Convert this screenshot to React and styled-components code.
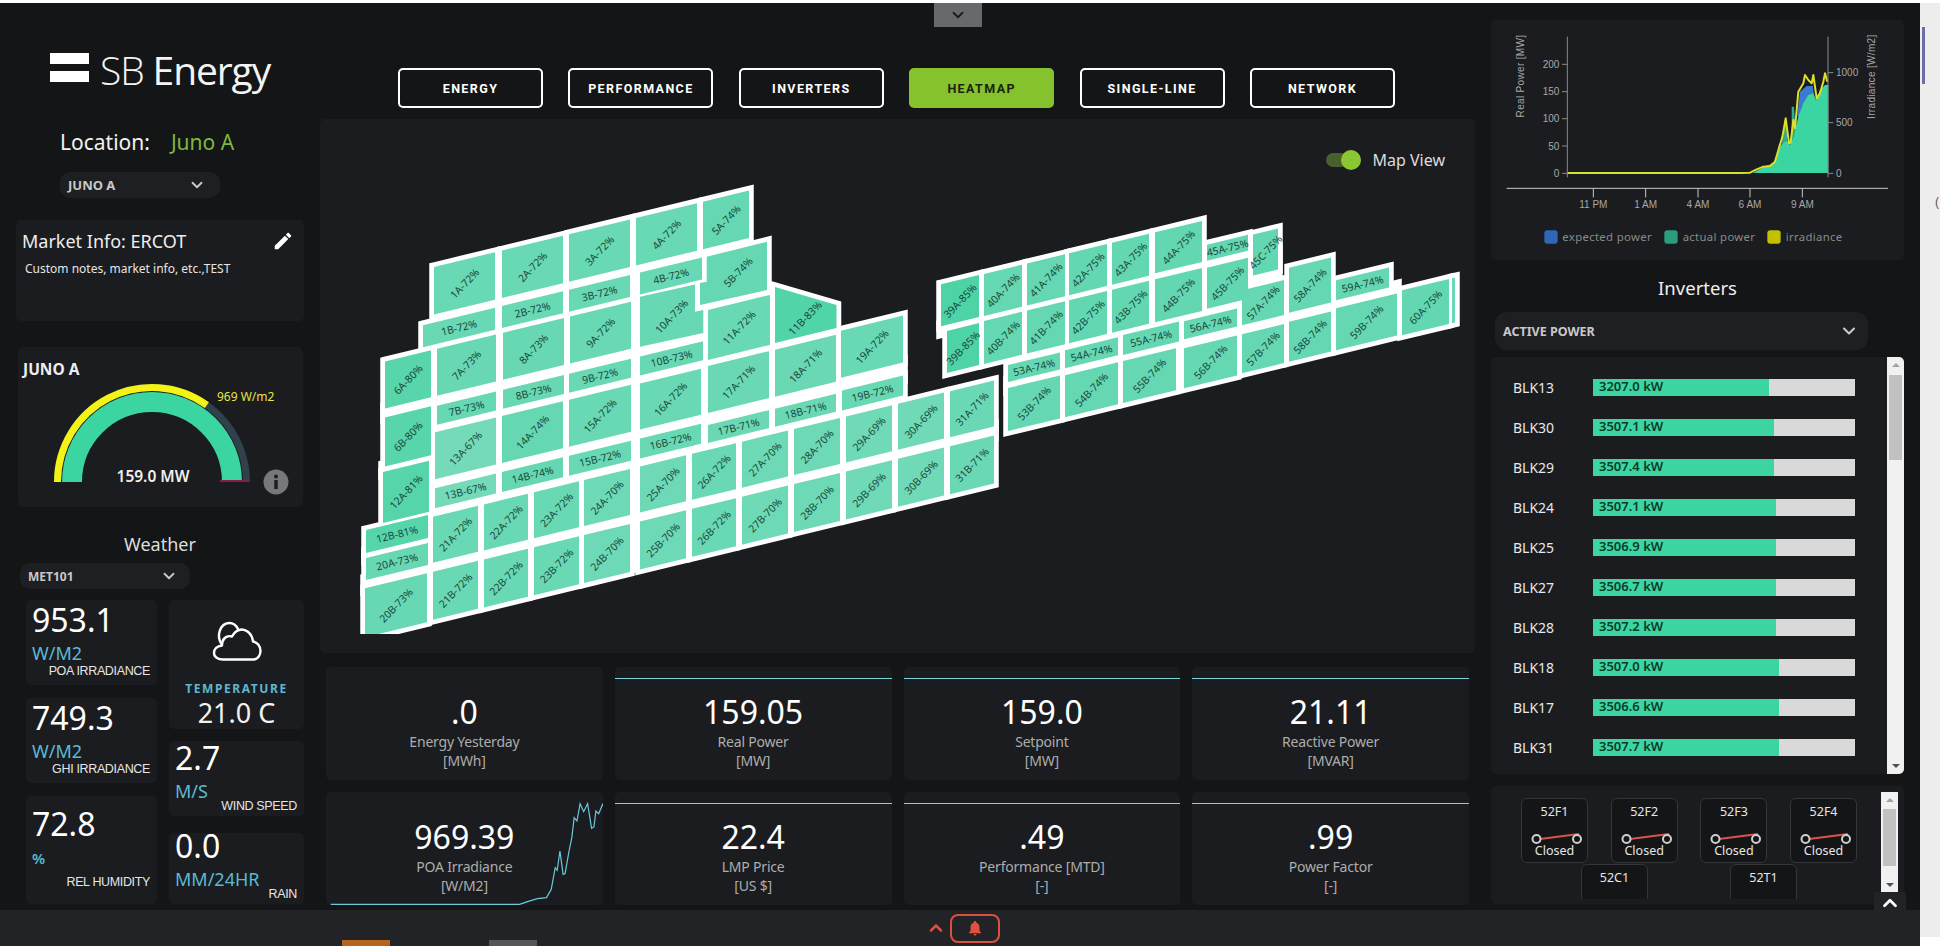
import React from 'react';
import styled, { createGlobalStyle } from 'styled-components';
import { ChevronDown, ChevronUp } from 'lucide-react';

const Global = createGlobalStyle`
  html, body { margin: 0; padding: 0; background: #fff; overflow: hidden; }
  * { box-sizing: border-box; }
`;
const sans = `"Noto Sans", "Open Sans", sans-serif`;
const arial = `"Liberation Sans", Arial, sans-serif`;

const Page = styled.div`
  position: relative; width: 1940px; height: 946px; padding-top: 3px; display: flex; overflow: hidden;
  font-family: ${sans}; color: #fff; background: #fff;
`;
const Shell = styled.div`width: 1920px; height: 943px; display: flex; flex-direction: column; background: #141517;`;
const Main = styled.div`display: flex; height: 907px; overflow: hidden;`;
const SideStrip = styled.div`position: relative; width: 20px; height: 934px; background: #ededed; flex: none;`;
const SideThumb = styled.div`position: absolute; left: 2px; top: 24px; width: 3px; height: 57px; background: #6b6fa8;`;
const SideGlyph = styled.span`position: absolute; left: 15px; top: 192px; font: 12px ${arial}; color: #555;`;
const TopTab = styled.div`
  position: absolute; left: 934px; top: 3px; width: 48px; height: 24px; background: #68696b;
  display: flex; align-items: center; justify-content: center; color: #1b1c1e;
`;

/* Left column */
const LeftCol = styled.div`width: 320px; flex: none; display: flex; flex-direction: column; align-items: flex-start;`;
const Logo = styled.div`margin: 47px 0 0 50px; height: 35px; display: flex; align-items: center; gap: 11px;`;
const LogoBars = styled.div`width: 39px; display: flex; flex-direction: column; gap: 7px;`;
const LogoBar = styled.div`height: 11px; background: #fff;`;
const LogoText = styled.div`margin-top: 3px; font: 400 39px/35px "Open Sans", ${sans}; letter-spacing: -1.1px; white-space: nowrap; color: #f4f4f4;`;
const LogoThin = styled.span`font-weight: 300;`;
const Location = styled.div`margin: 43px 0 0 60px; display: flex; gap: 21px; font-size: 21px; line-height: 28px; color: #f2f2f2;`;
const LocationValue = styled.span`color: #7fb83a;`;
const Select = styled.div`
  margin: ${p => p.$m}; width: ${p => p.$w}px; height: ${p => p.$h}px; background: #1e1f22; border-radius: ${p => p.$r}px;
  display: flex; align-items: center; justify-content: space-between; padding: 0 ${p => p.$pr}px 0 8px;
  font-weight: 700; font-size: ${p => p.$fs}px; color: #c9c9c9;
`;
const Card = styled.div`background: #1a1c1f; border-radius: 5px;`;
const MarketCard = styled(Card)`margin: 22px 0 0 16px; width: 288px; height: 101px; padding: 8px 10px 0 6px;`;
const MarketHead = styled.div`display: flex; justify-content: space-between; align-items: center; font-size: 18px; line-height: 26px; color: #eee;`;
const MarketNote = styled.div`margin: 7px 0 0 3px; font-size: 12px; line-height: 16px; color: #e5e5e5;`;
const GaugeCard = styled(Card)`margin: 26px 0 0 18px; width: 285px; height: 160px; padding-top: 12px; overflow: hidden;`;
const GaugeTitle = styled.div`margin-left: 5px; height: 20px; font-weight: 700; font-size: 15.5px; line-height: 20px; color: #eee;`;
const GaugeSvg = styled.svg`display: block; width: 285px; height: 128px;`;
const WeatherTitle = styled.div`margin-top: 25px; width: 320px; text-align: center; font-size: 18px; line-height: 24px; color: #ddd;`;
const WeatherGrid = styled.div`margin: 11px 0 0 26px; width: 278px; display: flex; justify-content: space-between;`;
const WeatherColL = styled.div`width: 131px; display: flex; flex-direction: column; gap: 13px;`;
const WeatherColR = styled.div`width: 135px; display: flex; flex-direction: column; gap: 12px;`;
const Metric = styled(Card)`
  height: ${p => p.$h}px; padding: ${p => p.$pad}px 7px 0 6px; margin-top: ${p => p.$mt || 0}px;
`;
const MetricValue = styled.div`font-size: 32px; line-height: 26px; color: #fff;`;
const MetricUnit = styled.div`margin-top: ${p => p.$g}px; font-size: ${p => p.$fs || 18}px; font-weight: ${p => p.$w || 400}; line-height: 26px; color: #5ab9d4;`;
const MetricCaption = styled.div`margin-top: ${p => p.$g}px; text-align: right; font: 12.5px/14px ${arial}; letter-spacing: -.35px; color: #e6e6e6;`;
const TempCard = styled(Card)`height: 129px; display: flex; flex-direction: column; align-items: center; padding-top: 21px;`;
const TempLabel = styled.div`margin-top: 18px; font-weight: 700; font-size: 12px; line-height: 16px; letter-spacing: 1.6px; color: #5fb7d0;`;
const TempValue = styled.div`font-size: 27px; line-height: 32px; color: #f2f2f2;`;

/* Center */
const CenterCol = styled.div`width: 1160px; flex: none;`;
const Nav = styled.div`padding: 65px 0 0 78px; display: flex; gap: 25.4px;`;
const NavButton = styled.div`
  width: 145px; height: 40px; border-radius: 5px; display: flex; align-items: center; justify-content: center;
  font: 700 12.5px Roboto, ${arial}; letter-spacing: 1.4px;
  border: 2px solid ${p => (p.$active ? '#85c22e' : '#fff')};
  background: ${p => (p.$active ? '#85c22e' : 'transparent')};
  color: ${p => (p.$active ? '#17260a' : '#fff')};
`;
const MapPanel = styled(Card)`position: relative; margin-top: 11px; width: 1155px; height: 534px; overflow: hidden;`;
const MapSvg = styled.svg`display: block; width: 1155px; height: 534px;`;
const MapToggle = styled.div`position: absolute; right: 30px; top: 30px; display: flex; align-items: center; gap: 25px; font-size: 16px; line-height: 22px; color: #ddd;`;
const ToggleTrack = styled.div`position: relative; width: 22px; height: 14px; border-radius: 7px; background: #47602d;`;
const ToggleThumb = styled.div`position: absolute; left: 15px; top: -3px; width: 20px; height: 20px; border-radius: 50%; background: #8ac832;`;
const KpiGrid = styled.div`margin: 14px 0 0 6px; width: 1143px; display: grid; grid-template-columns: repeat(4, 1fr); grid-auto-rows: 113px; gap: 12px;`;
const Kpi = styled(Card)`position: relative; padding-top: 25px; text-align: center;`;
const KpiLine = styled.div`position: absolute; left: 0; right: 0; top: 11px; height: 1px; background: #7fd4dc;`;
const KpiSpark = styled.svg`position: absolute; left: 0; bottom: 0; width: 277px; height: 113px;`;
const KpiValue = styled.div`position: relative; font-size: 32px; line-height: 40px; color: #fff;`;
const KpiLabel = styled.div`position: relative; font-size: 14px; line-height: 19px; letter-spacing: -.2px; color: #adadad;`;

/* Right */
const RightCol = styled.div`width: 440px; flex: none; padding-left: 11px;`;
const ChartCard = styled(Card)`margin-top: 17px; width: 413px; height: 240px;`;
const ChartSvg = styled.svg`display: block; width: 413px; height: 240px;`;
const InvTitle = styled.div`margin: 14px 0 0 0; width: 413px; text-align: center; font-size: 18.5px; line-height: 28px; color: #eee;`;
const ListPanel = styled(Card)`margin-top: 7px; width: 413px; height: 417px; display: flex; overflow: hidden;`;
const ListBody = styled.div`flex: 1; padding: 10px 0 0 22px;`;
const InvRow = styled.div`height: 40px; display: flex; align-items: center;`;
const InvName = styled.div`width: 80px; font-size: 14px; color: #e8e8e8;`;
const InvBar = styled.div`position: relative; width: 262px; height: 17px; background: #d9d9d9;`;
const InvFill = styled.div`height: 100%; background: #3bd5a1;`;
const InvValue = styled.span`position: absolute; left: 6px; top: -2px; font-weight: 600; font-size: 13px; line-height: 18px; color: #0c3a2b;`;
const Scrollbar = styled.div`
  width: 17px; flex: none; background: #f1f1f1; height: ${p => p.$h}px; margin: ${p => p.$m}; position: relative;
`;
const ScrollThumb = styled.div`position: absolute; left: 2px; right: 2px; top: ${p => p.$top}px; height: ${p => p.$h}px; background: #c1c1c1;`;
const ArrowUp = styled.div`position: absolute; left: 5px; top: 6px; width: 0; height: 0; border: 4px solid transparent; border-top: 0; border-bottom: 4px solid #a3a3a3;`;
const ArrowDown = styled.div`position: absolute; left: 5px; bottom: 6px; width: 0; height: 0; border: 4px solid transparent; border-bottom: 0; border-top: 4px solid #505050;`;
const BreakerPanel = styled(Card)`margin-top: 12px; width: 413px; height: 118px; display: flex;`;
const BreakerBody = styled.div`flex: 1; height: 113px; overflow: hidden; padding-top: 12px;`;
const BreakerRow = styled.div`display: flex; padding-left: ${p => p.$pl}px; gap: ${p => p.$gap}px; margin-bottom: 1px;`;
const Breaker = styled.div`
  width: 67px; height: 65px; flex: none; border: 1px solid #333538; border-radius: 6px; background: #141517;
  display: flex; flex-direction: column; align-items: center; padding-top: 5px;
`;
const BreakerName = styled.div`font-size: 12.5px; line-height: 16px; color: #e6e6e6;`;
const BreakerSvg = styled.svg`display: block; margin-top: 12px; width: 65px; height: 14px; flex: none;`;
const BreakerState = styled.div`margin-top: -2px; font-size: 12.5px; line-height: 14px; color: #e6e6e6;`;
const UpButton = styled.div`
  position: absolute; left: 1874px; top: 892px; width: 32px; height: 32px; background: #222327; border-radius: 2px;
  display: flex; justify-content: center; color: #fff;
`;

/* Bottom */
const BottomBar = styled.div`position: relative; flex: none; height: 36px; background: #222327; display: flex; align-items: center; padding-left: 926px; gap: 4px; color: #d9503f;`;
const BellBox = styled.div`width: 50px; height: 29px; border: 2px solid #d9503f; border-radius: 8px; display: flex; align-items: center; justify-content: center;`;
const Stub = styled.div`position: absolute; bottom: 0; left: ${p => p.$l}px; width: 48px; height: 6px; background: ${p => p.$c};`;

/* data */
const S = 0.243;
const A = (n, x0, x1, v0, v1, shape) => [n, x0, x1, v0, v1, shape];
const CELLS = [
  A('1A-72%',434,495,372.5,420),A('2A-72%',502,563,372.5,420),A('3A-72%',569,630,372.5,420),A('4A-72%',636,697,372.5,420),A('5A-74%',703,749,372.5,420),
  A('1B-72%',423,495,428,450),A('2B-72%',502,563,428,450),A('3B-72%',569,630,428,450),A('4B-72%',640,702,428,450),
  A('5B-74%',707,769,429,474,'706.7,256.7 767,241.7 767,290 700,305 700,283 706.7,281.7'),
  A('6A-80%',385,431,455,502),A('7A-73%',437,496,455,502),A('8A-73%',503,564,455,502),A('9A-72%',570,631,455,502),
  A('10A-73%',640,703,457,502,'640,296.7 695,284.5 695,311.7 703.3,310 703.3,333 640,346.7'),
  A('6B-80%',385,431,511,560),A('7B-73%',437,496,512,531),A('8B-73%',503,564,512,531),A('9B-72%',569,631,512,531),A('10B-73%',640,703,512,531),
  A('11A-72%',708,770,482,532),A('19A-72%',841,903,535,582),A('18A-71%',775,836,538,585),A('17A-71%',708,769,538,585),A('16A-72%',640,701,539,585),
  A('13A-67%',435,496,538,585),A('14A-74%',502,563,538,585),A('15A-72%',569,631,538,585),
  A('12A-81%',383,429,565,616),A('13B-67%',435,496,594,614),A('14B-74%',502,563,594,614),A('15B-72%',569,631,594,614),A('16B-72%',640,701,594,614),A('17B-71%',708,769,597,615),A('18B-71%',775,836,597,615),A('19B-72%',842,903,595,615),
  A('12B-81%',366,428,619,642),A('20A-73%',366,428,647,669),A('20B-73%',365,427,677,726),
  A('21A-72%',433,478,622,668),A('22A-72%',484,528,622,668),A('23A-72%',534,579,622,668),A('24A-70%',584,630,622,668),A('25A-70%',640,686,622,668),A('26A-72%',692,736,622,668),A('27A-70%',742,788,622,668),A('28A-70%',794,840,622,668),A('29A-69%',846,892,622,668),A('30A-69%',898,944,622,668),A('31A-71%',950,994,622,668),
  A('21B-72%',433,478,677,725),A('22B-72%',484,528,677,725),A('23B-72%',534,579,677,725),A('24B-70%',584,630,677,725),A('25B-70%',640,686,677,725),A('26B-72%',692,736,677,725),A('27B-70%',742,788,677,725),A('28B-70%',794,840,677,725),A('29B-69%',846,892,677,725),A('30B-69%',898,944,677,725),A('31B-71%',950,994,677,725),
  A('39A-85%',941,979,513,555),A('40A-74%',984,1022,513,555),A('41A-74%',1027,1065,513,555),A('42A-75%',1069,1107,513,555),A('43A-75%',1112,1149,513,555),A('44A-75%',1155,1202,513,554),A('45A-75%',1207,1248,538,554),A('45C-75%',1253,1278,539,580),
  A('39B-85%',947,979,561,603),A('40B-74%',984,1022,560,603),A('41B-74%',1027,1065,560,603),A('42B-75%',1069,1107,560,603),A('43B-75%',1112,1149,560,603),A('44B-75%',1155,1202,560,603),A('45B-75%',1207,1248,561,602),
  A('53A-74%',1008,1060,610,627),A('54A-74%',1065,1118,609,627),A('55A-74%',1123,1179,608,628),A('56A-74%',1184,1237,609,627),A('57A-74%',1242,1284,592,627),A('58A-74%',1289,1331,581,626),A('59A-74%',1336,1389,605,625),
  A('53B-74%',1008,1060,633,676),A('54B-74%',1065,1118,634,676),A('55B-74%',1123,1176,634,676),A('56B-74%',1184,1237,636,676),A('57B-74%',1242,1284,636,675),A('58B-74%',1289,1331,635,675),A('59B-74%',1336,1397,633,675),A('60A-75%',1402,1449,631,676),
  A('',1452,1455,631,676),
];
const BACKING = [
  [628,642,425,722],[437,703,500,514],[437,703,529,540],[435,631,583,596],[640,903,580,600],[435,631,612,624],
  [640,994,666,679],[433,631,666,679],[385,431,500,512],[366,428,640,649],[365,428,667,679],[383,429,558,567],[708,770,530,540],
  [941,1202,553,562],[1207,1248,552,563],[1248,1278,560,600],[1008,1237,625,635],[1242,1397,624,637],
];
const ROOF = '775,287 836.5,305 836.5,328 775,343';

const pts = (x0, x1, v0, v1) =>
  `${x0},${v0 - S * x0} ${x1},${v0 - S * x1} ${x1},${v1 - S * x1} ${x0},${v1 - S * x0}`;
const shapeOf = (c) => c[5] || pts(c[1], c[2], c[3], c[4]);
const pctColor = (pct) => {
  const t = Math.max(0, Math.min(1, (pct - 67) / 18));
  const mix = (a, b) => Math.round(a + (b - a) * t);
  return `rgb(${mix(116, 77)},${mix(218, 211)},${mix(185, 166)})`;
};
const cellPct = (n) => parseInt(n.split('-')[1] || '72', 10);

const Heatmap = () => (
  <MapSvg viewBox="320 119 1155 534">
    <defs><clipPath id="mapclip"><rect x="320" y="119" width="1155" height="515" /></clipPath></defs>
    <g clipPath="url(#mapclip)">
      <g fill="#fff" stroke="#fff" strokeWidth="9.5" strokeLinejoin="miter">
        {BACKING.map((b, i) => <polygon key={i} points={pts(...b)} />)}
        {CELLS.map((c, i) => <polygon key={i} points={shapeOf(c)} />)}
        <polygon points={ROOF} />
      </g>
      {CELLS.map((c, i) => <polygon key={i} points={shapeOf(c)} fill={pctColor(cellPct(c[0]))} />)}
      <polygon points={ROOF} fill={pctColor(83)} />
      <g fontFamily="Noto Sans, sans-serif" fontSize="10.4" fill="#17493a" textAnchor="middle" dominantBaseline="central">
        {CELLS.filter(c => c[0]).map((c) => {
          const xc = (c[1] + c[2]) / 2;
          const yc = (c[3] + c[4]) / 2 - S * xc;
          const rot = c[4] - c[3] > 30 ? -46 : -13.7;
          return <text key={c[0]} x={xc} y={yc} transform={`rotate(${rot} ${xc} ${yc})`}>{c[0]}</text>;
        })}
        <text x="805" y="318" transform="rotate(-46 805 318)">11B-83%</text>
      </g>
    </g>
  </MapSvg>
);

const arc = (cx, cy, r, a0, a1) => {
  const p = (a) => [cx + r * Math.cos(a), cy - r * Math.sin(a)];
  const [x0, y0] = p(a0); const [x1, y1] = p(a1);
  return `M${x0} ${y0} A${r} ${r} 0 0 1 ${x1} ${y1}`;
};
const YEL_END = Math.atan2(0.814, 0.581);

const Gauge = () => (
  <GaugeSvg viewBox="18 378 285 128">
    <path d={arc(152, 481, 94.5, Math.PI, 0)} fill="none" stroke="#2f414b" strokeWidth="7" />
    <path d={arc(152, 481, 94.5, Math.PI, YEL_END)} fill="none" stroke="#f3f316" strokeWidth="7" />
    <path d={arc(152, 481, 80, Math.PI, 0)} fill="none" stroke="#3bd5a1" strokeWidth="20" />
    <line x1="220" x2="247" y1="480" y2="480" stroke="#8b1a4c" strokeWidth="2" />
    <text x="153" y="481" textAnchor="middle" fontFamily="Noto Sans, sans-serif" fontWeight="600" fontSize="15.5" fill="#f0f0f0">159.0 MW</text>
    <text x="217" y="400" fontFamily="Noto Sans, sans-serif" fontSize="12" fill="#e3e34a">969 W/m2</text>
    <circle cx="276" cy="481" r="12.5" fill="#77787a" />
    <circle cx="276" cy="475.5" r="1.9" fill="#1a1c1f" />
    <rect x="274.3" y="479" width="3.4" height="9" fill="#1a1c1f" />
  </GaugeSvg>
);

const CloudIcon = () => (
  <svg width="50" height="42" viewBox="0 0 50 42" fill="none" stroke="#fff" strokeWidth="2.4" strokeLinejoin="round" strokeLinecap="round">
    <path d="M11 38.5H41C46 38.5 48.5 34 48.5 30C48.5 25 45 21 41 20.5C40 12 33 7 27 9C24 10 22 12 20 15.5C14 14 10 18 10 24.5C5 25 2 28 2 32C2 36 6 38.5 11 38.5Z" />
    <path d="M9.5 23C4 15 8 2.5 17 2C21 1.8 24 4 26 8" />
  </svg>
);

const PencilIcon = () => (
  <svg width="22" height="22" viewBox="0 0 24 24" fill="#fff">
    <path d="M3 17.25V21h3.75L17.81 9.94l-3.75-3.75L3 17.25zM20.71 7.04c.39-.39.39-1.02 0-1.41l-2.34-2.34c-.39-.39-1.02-.39-1.41 0l-1.83 1.83 3.75 3.75 1.83-1.83z" />
  </svg>
);
const BellIcon = () => (
  <svg width="18" height="18" viewBox="0 0 24 24" fill="#e0503f">
    <path d="M12 22c1.1 0 2-.9 2-2h-4c0 1.1.89 2 2 2zm6-6v-5c0-3.07-1.64-5.64-4.5-6.32V4c0-.83-.67-1.5-1.5-1.5s-1.5.67-1.5 1.5v.68C7.63 5.36 6 7.92 6 11v5l-2 2v1h16v-1l-2-2z" />
  </svg>
);

const SPARK = [[22,760],[500,760],[520,752],[545,743],[568,740],[580,715],[590,650],[595,658],[602,600],[610,670],[615,668],[625,600],[632,560],[638,500],[645,510],[653,458],[662,482],[672,458],[682,532],[688,528],[693,480],[700,488],[710,460],[716,470]];
const sparkPts = SPARK.map(([x, y]) => `${x / 2.53 - 4},${(y / 3) + 650 - 791}`).join(' ');

const toChart = (list) => list.map(([x, y]) => `${x + 780},${y + 150}`).join(' ');
const TEAL = '262,519 820,519 ' + toChart([[40,368],[70,352],[100,340],[118,295],[130,275],[140,270],[150,285],[160,260],[175,200],[190,160],[205,135],[220,130],[228,150],[240,120],[255,105],[265,105],[265,369]]);
const BLUE = toChart([[122,270],[128,245],[136,270],[130,282]]);
const BLUE2 = toChart([[172,195],[180,125],[200,108],[218,108],[222,135],[205,140],[190,165],[176,205]]);
const SPIKE1 = toChart([[133,212],[140,212],[141,272],[131,278]]);
const SPIKE2 = toChart([[155,170],[162,170],[166,240],[155,275]]);
const YELLOW = '262,519 780,519 ' + toChart([[30,368],[50,358],[70,350],[90,348],[105,335],[118,290],[127,262],[137,205],[147,280],[152,278],[160,210],[165,235],[175,125],[190,100],[195,75],[205,90],[215,100],[220,75],[230,145],[240,130],[250,95],[255,70],[262,95]]);

const AXT = { fontFamily: 'Liberation Sans, Arial, sans-serif', fontSize: 30, fill: '#a8a8a8' };
const Chart = () => (
  <ChartSvg viewBox="33 60 1239 720">
    <polygon points={BLUE} fill="#3a7bd0" />
    <polygon points={BLUE2} fill="#3a7bd0" />
    <polygon points={TEAL} fill="#3bd5a1" />
    <polygon points={SPIKE1} fill="#2fae8e" />
    <polygon points={SPIKE2} fill="#2fae8e" />
    <polyline points={YELLOW} fill="none" stroke="#dbe02c" strokeWidth="6" strokeLinejoin="round" />
    <g stroke="#8a8a8a" strokeWidth="3" fill="none">
      <line x1="262" y1="110" x2="262" y2="532" />
      <line x1="1044" y1="110" x2="1044" y2="532" />
      {[193, 275, 356, 438, 520].map(y => <line key={y} x1="246" x2="262" y1={y} y2={y} />)}
      {[218, 368, 520].map(y => <line key={y} x1="1044" x2="1060" y1={y} y2={y} />)}
    </g>
    <line x1="80" x2="1224" y1="565" y2="565" stroke="#c8c8c8" strokeWidth="3" />
    {[340, 497, 654, 810, 967].map(x => <line key={x} x1={x} x2={x} y1="565" y2="592" stroke="#c8c8c8" strokeWidth="3" />)}
    <g {...AXT} textAnchor="end">
      {[['200',193],['150',275],['100',356],['50',438],['0',520]].map(([t, y]) => <text key={t} x="238" y={y + 11}>{t}</text>)}
    </g>
    <g {...AXT}>
      {[['1000',218],['500',368],['0',520]].map(([t, y]) => <text key={t} x="1068" y={y + 11}>{t}</text>)}
    </g>
    <g {...AXT} textAnchor="middle">
      {[['11 PM',340],['1 AM',497],['4 AM',654],['6 AM',810],['9 AM',967]].map(([t, x]) => <text key={t} x={x} y="623">{t}</text>)}
      <text transform="translate(132 228) rotate(-90)" style={{ letterSpacing: 1 }}>Real Power [MW]</text>
      <text transform="translate(1186 230) rotate(-90)" style={{ letterSpacing: 1 }}>Irradiance [W/m2]</text>
    </g>
    <g fontFamily="Noto Sans, sans-serif" fontSize="34" fill="#8a8a8a">
      <rect x="193" y="691" width="40" height="40" rx="9" fill="#2f66b8" />
      <text x="247" y="723" style={{ letterSpacing: 1 }}>expected power</text>
      <rect x="553" y="691" width="40" height="40" rx="9" fill="#2a9d7d" />
      <text x="608" y="723" style={{ letterSpacing: 1 }}>actual power</text>
      <rect x="862" y="691" width="40" height="40" rx="9" fill="#c4c000" />
      <text x="917" y="723" style={{ letterSpacing: 1 }}>irradiance</text>
    </g>
  </ChartSvg>
);

const INVERTERS = [
  ['BLK13','3207.0 kW',176],['BLK30','3507.1 kW',181],['BLK29','3507.4 kW',181],['BLK24','3507.1 kW',183],['BLK25','3506.9 kW',183],
  ['BLK27','3506.7 kW',183],['BLK28','3507.2 kW',183],['BLK18','3507.0 kW',186],['BLK17','3506.6 kW',186],['BLK31','3507.7 kW',186],
];
const KPIS = [
  ['.0','Energy Yesterday','[MWh]'],['159.05','Real Power','[MW]'],['159.0','Setpoint','[MW]'],['21.11','Reactive Power','[MVAR]'],
  ['969.39','POA Irradiance','[W/M2]'],['22.4','LMP Price','[US $]'],['.49','Performance [MTD]','[-]'],['.99','Power Factor','[-]'],
];
const NAV = ['ENERGY','PERFORMANCE','INVERTERS','HEATMAP','SINGLE-LINE','NETWORK'];

const BreakerCell = ({ name, clipped }) => (
  <Breaker>
    <BreakerName>{name}</BreakerName>
    <BreakerSvg viewBox="0 0 65 14">
      <line x1="18" y1="7" x2="57" y2="2" stroke="#d9534f" strokeWidth="2" />
      <circle cx="14.5" cy="7" r="4" fill="none" stroke="#cfcfcf" strokeWidth="2" />
      <circle cx="55" cy="7" r="4" fill="none" stroke="#cfcfcf" strokeWidth="2" />
    </BreakerSvg>
    {!clipped && <BreakerState>Closed</BreakerState>}
  </Breaker>
);

export default function App() {
  return (
    <Page>
      <Global />
      <Shell>
        <Main>
          <LeftCol>
            <Logo>
              <LogoBars><LogoBar /><LogoBar /></LogoBars>
              <LogoText><LogoThin>SB</LogoThin> Energy</LogoText>
            </Logo>
            <Location><span>Location:</span><LocationValue>Juno A</LocationValue></Location>
            <Select $m="16px 0 0 60px" $w={160} $h={26} $r={10} $pr={14} $fs={13}>JUNO A<ChevronDown size={18} strokeWidth={2.5} /></Select>
            <MarketCard>
              <MarketHead>Market Info: ERCOT<PencilIcon /></MarketHead>
              <MarketNote>Custom notes, market info, etc.,TEST</MarketNote>
            </MarketCard>
            <GaugeCard>
              <GaugeTitle>JUNO A</GaugeTitle>
              <Gauge />
            </GaugeCard>
            <WeatherTitle>Weather</WeatherTitle>
            <Select $m="7px 0 0 20px" $w={170} $h={26} $r={10} $pr={12} $fs={12}>MET101<ChevronDown size={18} strokeWidth={2.5} /></Select>
            <WeatherGrid>
              <WeatherColL>
                <Metric $h={85} $pad={7}>
                  <MetricValue>953.1</MetricValue><MetricUnit $g={7}>W/M2</MetricUnit><MetricCaption $g={-2}>POA IRRADIANCE</MetricCaption>
                </Metric>
                <Metric $h={85} $pad={7}>
                  <MetricValue>749.3</MetricValue><MetricUnit $g={7}>W/M2</MetricUnit><MetricCaption $g={-2}>GHI IRRADIANCE</MetricCaption>
                </Metric>
                <Metric $h={108} $pad={15}>
                  <MetricValue>72.8</MetricValue><MetricUnit $g={8} $fs={15} $w={600}>%</MetricUnit><MetricCaption $g={4}>REL HUMIDITY</MetricCaption>
                </Metric>
              </WeatherColL>
              <WeatherColR>
                <TempCard>
                  <CloudIcon />
                  <TempLabel>TEMPERATURE</TempLabel>
                  <TempValue>21.0 C</TempValue>
                </TempCard>
                <Metric $h={75} $pad={4}>
                  <MetricValue>2.7</MetricValue><MetricUnit $g={7}>M/S</MetricUnit><MetricCaption $g={-5}>WIND SPEED</MetricCaption>
                </Metric>
                <Metric $h={71} $pad={0} $mt={5}>
                  <MetricValue>0.0</MetricValue><MetricUnit $g={7}>MM/24HR</MetricUnit><MetricCaption $g={-5}>RAIN</MetricCaption>
                </Metric>
              </WeatherColR>
            </WeatherGrid>
          </LeftCol>

          <CenterCol>
            <Nav>
              {NAV.map(n => <NavButton key={n} $active={n === 'HEATMAP'}>{n}</NavButton>)}
            </Nav>
            <MapPanel>
              <Heatmap />
              <MapToggle>
                <ToggleTrack><ToggleThumb /></ToggleTrack>
                Map View
              </MapToggle>
            </MapPanel>
            <KpiGrid>
              {KPIS.map(([v, l, u], i) => (
                <Kpi key={l}>
                  {(i !== 0 && i !== 4) && <KpiLine />}
                  {i === 4 && (
                    <KpiSpark viewBox="0 0 277 113">
                      <polyline points={sparkPts} fill="none" stroke="#6cc9dc" strokeWidth="1.2" />
                    </KpiSpark>
                  )}
                  <KpiValue>{v}</KpiValue>
                  <KpiLabel>{l}</KpiLabel>
                  <KpiLabel>{u}</KpiLabel>
                </Kpi>
              ))}
            </KpiGrid>
          </CenterCol>

          <RightCol>
            <ChartCard><Chart /></ChartCard>
            <InvTitle>Inverters</InvTitle>
            <Select $m="10px 0 0 4px" $w={373} $h={38} $r={12} $pr={9} $fs={12.5}>ACTIVE POWER<ChevronDown size={20} strokeWidth={2.5} /></Select>
            <ListPanel>
              <ListBody>
                {INVERTERS.map(([n, v, w]) => (
                  <InvRow key={n}>
                    <InvName>{n}</InvName>
                    <InvBar>
                      <InvFill style={{ width: w }} />
                      <InvValue>{v}</InvValue>
                    </InvBar>
                  </InvRow>
                ))}
              </ListBody>
              <Scrollbar $h={417} $m="0">
                <ArrowUp /><ScrollThumb $top={18} $h={85} /><ArrowDown />
              </Scrollbar>
            </ListPanel>
            <BreakerPanel>
              <BreakerBody>
                <BreakerRow $pl={30} $gap={22.7}>
                  {['52F1','52F2','52F3','52F4'].map(n => <BreakerCell key={n} name={n} />)}
                </BreakerRow>
                <BreakerRow $pl={90} $gap={82}>
                  {['52C1','52T1'].map(n => <BreakerCell key={n} name={n} clipped />)}
                </BreakerRow>
              </BreakerBody>
              <Scrollbar $h={101} $m="6px 6px 0 0">
                <ArrowUp /><ScrollThumb $top={17} $h={57} /><ArrowDown />
              </Scrollbar>
            </BreakerPanel>
          </RightCol>
        </Main>
        <BottomBar>
          <ChevronUp size={20} strokeWidth={3} />
          <BellBox><BellIcon /></BellBox>
          <Stub $l={342} $c="#b5651d" />
          <Stub $l={489} $c="#555658" />
        </BottomBar>
      </Shell>
      <SideStrip>
        <SideThumb />
        <SideGlyph>(</SideGlyph>
      </SideStrip>
      <TopTab><ChevronDown size={18} strokeWidth={2.5} /></TopTab>
      <UpButton><ChevronUp size={22} strokeWidth={3} /></UpButton>
    </Page>
  );
}
